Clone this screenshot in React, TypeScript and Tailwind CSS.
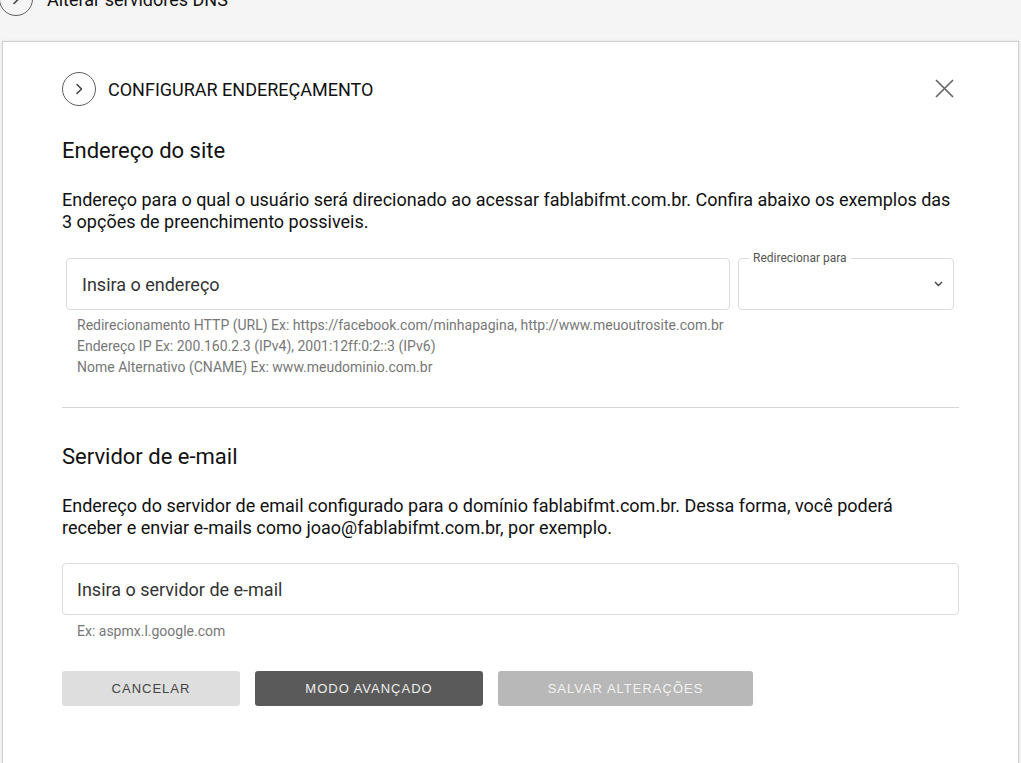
import * as React from "react";

const ChevronCircle: React.FC = () => (
  <div className="flex h-[34px] w-[34px] flex-shrink-0 items-center justify-center rounded-full border-[1.5px] border-[#5f5f5f]">
    <svg width="10" height="12" viewBox="0 0 10 12" fill="none">
      <path d="M3 1.5 L7.5 6 L3 10.5" stroke="#444" strokeWidth="1.6" strokeLinecap="round" strokeLinejoin="round" />
    </svg>
  </div>
);

const App: React.FC = () => {
  return (
    <div className="min-h-screen overflow-hidden bg-[#f5f5f5] px-[2px] font-['Roboto',sans-serif] text-[#111]">
      {/* Previous step (scrolled out of view) */}
      <div className="-mt-[18px] ml-[-3px] flex h-[34px] items-center gap-[14px]">
        <ChevronCircle />
        <span className="text-[18px] text-[#111]">Alterar servidores DNS</span>
      </div>

      {/* Card */}
      <div className="mt-[25px] border border-[#cfcfcf] bg-white px-[59px] pb-[60px] pt-[30px] shadow-[0_0_3px_rgba(0,0,0,0.08)]">
        {/* Header */}
        <div className="flex h-[34px] items-center justify-between">
          <div className="flex items-center gap-[12px]">
            <ChevronCircle />
            <span className="text-[18px] text-[#111]">CONFIGURAR ENDEREÇAMENTO</span>
          </div>
          <svg className="mr-[5px] -mt-[2px]" width="19" height="19" viewBox="0 0 19 19" fill="none">
            <path d="M1 1 L18 18 M18 1 L1 18" stroke="#666" strokeWidth="1.7" />
          </svg>
        </div>

        {/* Endereço do site */}
        <h2 className="mt-[31px] text-[22px] leading-[28px] text-[#111]">Endereço do site</h2>
        <p className="mt-[24px] pr-[6px] text-[18px] leading-[22px]">
          Endereço para o qual o usuário será direcionado ao acessar fablabifmt.com.br. Confira abaixo os exemplos das 3 opções de preenchimento possiveis.
        </p>

        <div className="mt-[25px] flex gap-[8px] pl-[4px] pr-[5px]">
          <div className="flex h-[52px] flex-1 items-center rounded-[4px] border border-[#dcdcdc] px-[15px]">
            <span className="text-[18px] text-[#333]">Insira o endereço</span>
          </div>
          <div className="relative flex h-[52px] w-[216px] items-center justify-end rounded-[4px] border border-[#dcdcdc] pr-[10px]">
            <span className="absolute left-[10px] top-[-8px] bg-white px-[4px] text-[12px] leading-[14px] text-[#555]">
              Redirecionar para
            </span>
            <svg width="9" height="6" viewBox="0 0 9 6" fill="none">
              <path d="M1 1 L4.5 4.5 L8 1" stroke="#444" strokeWidth="1.4" />
            </svg>
          </div>
        </div>
        <div className="mt-[5px] pl-[15px] text-[14px] leading-[21px] text-[#777]">
          <div>Redirecionamento HTTP (URL) Ex: https://facebook.com/minhapagina, http://www.meuoutrosite.com.br</div>
          <div>Endereço IP Ex: 200.160.2.3 (IPv4), 2001:12ff:0:2::3 (IPv6)</div>
          <div>Nome Alternativo (CNAME) Ex: www.meudominio.com.br</div>
        </div>

        <hr className="mt-[29px] border-t border-[#d6d6d6]" />

        {/* Servidor de e-mail */}
        <h2 className="mt-[35px] text-[22px] leading-[28px] text-[#111]">Servidor de e-mail</h2>
        <p className="mt-[24px] pr-[6px] text-[18px] leading-[22px]">
          Endereço do servidor de email configurado para o domínio fablabifmt.com.br. Dessa forma, você poderá receber e enviar e-mails como joao@fablabifmt.com.br, por exemplo.
        </p>
        <div className="mt-[24px] flex h-[52px] items-center rounded-[4px] border border-[#dcdcdc] px-[14px]">
          <span className="text-[18px] text-[#333]">Insira o servidor de e-mail</span>
        </div>
        <div className="mt-[6px] pl-[15px] text-[14px] leading-[21px] text-[#777]">Ex: aspmx.l.google.com</div>

        {/* Actions */}
        <div className="mt-[29px] flex gap-[15px] font-['Liberation_Sans',Arial,sans-serif] text-[13px] tracking-[1px]">
          <button className="h-[35px] w-[178px] rounded-[3px] bg-[#dedede] text-[#444]">CANCELAR</button>
          <button className="h-[35px] w-[228px] rounded-[3px] bg-[#5a5a5a] text-[#eee]">MODO AVANÇADO</button>
          <button className="h-[35px] w-[255px] rounded-[3px] bg-[#b8b8b8] text-[#f2f2f2]">SALVAR ALTERAÇÕES</button>
        </div>
      </div>
    </div>
  );
};

export default App;
